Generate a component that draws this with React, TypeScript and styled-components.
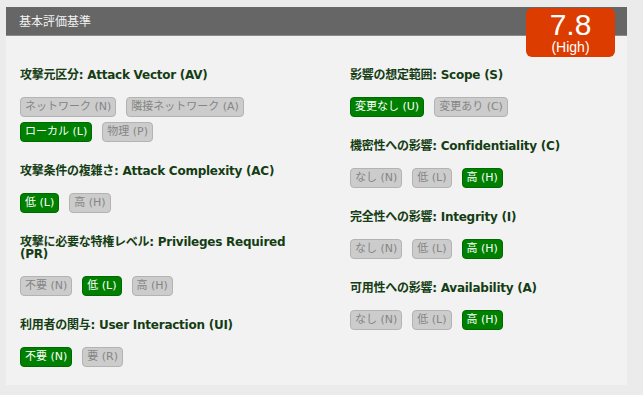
import React from 'react';
import styled, { createGlobalStyle } from 'styled-components';

const GlobalStyle = createGlobalStyle`
  html, body {
    margin: 0;
    padding: 0;
    background: #ebebeb;
  }
  body {
    font-family: "DejaVu Sans", "Noto Sans CJK JP", sans-serif;
  }
`;

// Types
interface Metric {
  title: string;
  options: string[];
  active: number;
}

const leftMetrics: Metric[] = [
  { title: '攻撃元区分: Attack Vector (AV)', options: ['ネットワーク (N)', '隣接ネットワーク (A)', 'ローカル (L)', '物理 (P)'], active: 2 },
  { title: '攻撃条件の複雑さ: Attack Complexity (AC)', options: ['低 (L)', '高 (H)'], active: 0 },
  { title: '攻撃に必要な特権レベル: Privileges Required (PR)', options: ['不要 (N)', '低 (L)', '高 (H)'], active: 1 },
  { title: '利用者の関与: User Interaction (UI)', options: ['不要 (N)', '要 (R)'], active: 0 },
];

const rightMetrics: Metric[] = [
  { title: '影響の想定範囲: Scope (S)', options: ['変更なし (U)', '変更あり (C)'], active: 0 },
  { title: '機密性への影響: Confidentiality (C)', options: ['なし (N)', '低 (L)', '高 (H)'], active: 2 },
  { title: '完全性への影響: Integrity (I)', options: ['なし (N)', '低 (L)', '高 (H)'], active: 2 },
  { title: '可用性への影響: Availability (A)', options: ['なし (N)', '低 (L)', '高 (H)'], active: 2 },
];

// Styled Components
const Page = styled.div`
  padding: 7px 16px 10px 6px;
`;

const Panel = styled.section`
  position: relative;
  width: 621px;
  height: 378px;
  background: #f2f2f2;
`;

const Header = styled.div`
  height: 28px;
  line-height: 28px;
  padding-left: 13px;
  background: #666666;
  border-bottom: 1px solid #8a8a8a;
  color: #f2f2f2;
  font-size: 12px;
  font-family: "Noto Sans CJK JP", sans-serif;
`;

const ScoreBadge = styled.div`
  position: absolute;
  top: 1px;
  right: 12px;
  width: 89px;
  height: 49px;
  border-radius: 6px;
  background: #dd3c00;
  color: #ffffff;
  font-family: "Liberation Sans", Arial, sans-serif;
  display: flex;
  flex-direction: column;
  align-items: center;
  justify-content: center;
`;

const Score = styled.div`
  font-size: 30px;
  line-height: 30px;
  margin-top: -2px;
`;

const Severity = styled.div`
  font-size: 14px;
  line-height: 14px;
`;

const Body = styled.div`
  display: grid;
  grid-template-columns: 300px 1fr;
  column-gap: 30px;
  padding: 33px 14px 0 14px;
`;

const Column = styled.div`
  display: flex;
  flex-direction: column;
  gap: 23px;
`;

const Section = styled.div`
  display: flex;
  flex-direction: column;
`;

const Title = styled.div`
  font-size: 12px;
  line-height: 12px;
  font-weight: bold;
  letter-spacing: -0.25px;
  color: #143d14;
  margin-bottom: 16px;
  width: 280px;
`;

const Options = styled.div`
  display: flex;
  flex-wrap: wrap;
  gap: 5px 10px;
`;

const Option = styled.span<{ $active: boolean }>`
  display: inline-block;
  height: 18px;
  line-height: 18px;
  padding: 0 4px;
  border-radius: 4px;
  font-size: 11px;
  border: 1px solid ${p => (p.$active ? '#006a00' : '#b3b3b3')};
  background: ${p => (p.$active ? '#008000' : '#cccccc')};
  color: ${p => (p.$active ? '#ffffff' : '#858585')};
`;

const MetricBlock: React.FC<{ metric: Metric }> = ({ metric }) => (
  <Section>
    <Title>{metric.title}</Title>
    <Options>
      {metric.options.map((opt, i) => (
        <Option key={opt} $active={i === metric.active}>
          {opt}
        </Option>
      ))}
    </Options>
  </Section>
);

const App: React.FC = () => (
  <Page>
    <GlobalStyle />
    <Panel>
      <Header>基本評価基準</Header>
      <ScoreBadge>
        <Score>7.8</Score>
        <Severity>(High)</Severity>
      </ScoreBadge>
      <Body>
        <Column>
          {leftMetrics.map(m => (
            <MetricBlock key={m.title} metric={m} />
          ))}
        </Column>
        <Column>
          {rightMetrics.map(m => (
            <MetricBlock key={m.title} metric={m} />
          ))}
        </Column>
      </Body>
    </Panel>
  </Page>
);

export default App;
